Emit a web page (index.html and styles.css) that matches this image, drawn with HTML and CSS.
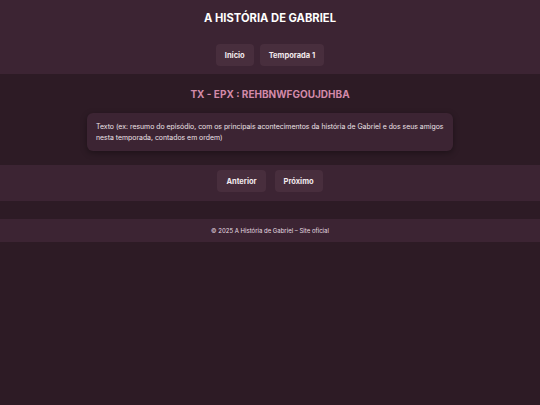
FILE: index.html
```html
<!DOCTYPE html>
<html lang="pt">
<head>
<meta charset="utf-8">
<title>A História de Gabriel</title>
<link rel="stylesheet" href="styles.css">
</head>
<body>
  <header class="top">
    <h1 class="title">A HISTÓRIA DE GABRIEL</h1>
    <nav class="menu">
      <a class="btn" href="#">Início</a>
      <a class="btn" href="#">Temporada 1</a>
    </nav>
  </header>
  <main class="main">
    <h2 class="ep-title">TX - EPX : REHBNWFGOUJDHBA</h2>
    <div class="card">
      <p>Texto (ex: resumo do episódio, com os principais acontecimentos da história de Gabriel e dos seus amigos nesta temporada, contados em ordem)</p>
    </div>
  </main>
  <div class="pager">
    <a class="btn" href="#">Anterior</a>
    <a class="btn" href="#">Próximo</a>
  </div>
  <footer class="foot">© 2025 A História de Gabriel – Site oficial</footer>
</body>
</html>
```

FILE: styles.css
```css
html, body {
  margin: 0;
  padding: 0;
  background: #2d1b25;
  font-family: Inter, "DejaVu Sans", sans-serif;
  color: #f1e8ec;
}
.top {
  background: #3c2433;
  height: 74px;
  display: flex;
  flex-direction: column;
  align-items: center;
  padding-top: 11px;
  box-sizing: border-box;
}
.title {
  margin: 0;
  font-size: 11.2px;
  font-weight: 700;
  color: #ffffff;
  line-height: 15px;
}
.menu {
  display: flex;
  gap: 6px;
  margin-top: 18px;
}
.btn {
  display: inline-flex;
  align-items: center;
  justify-content: center;
  height: 22px;
  padding: 0 9px;
  background: #482e3d;
  border-radius: 4px;
  color: #f3eaee;
  font-size: 7.5px;
  font-weight: 700;
  text-decoration: none;
}
.main {
  display: flex;
  flex-direction: column;
  align-items: center;
  padding-top: 13px;
  height: 91px;
  box-sizing: border-box;
}
.ep-title {
  margin: 0;
  font-size: 10px;
  font-weight: 700;
  color: #d38aa9;
  line-height: 14px;
}
.card {
  margin-top: 12px;
  width: 366px;
  box-sizing: border-box;
  background: #3c2433;
  border-radius: 6px;
  padding: 8px 9px;
  box-shadow: 0 2px 6px rgba(0, 0, 0, 0.35);
}
.card p {
  margin: 0;
  font-size: 6.9px;
  line-height: 11px;
  color: #ece2e7;
}
.pager {
  background: #3c2433;
  height: 36px;
  display: flex;
  justify-content: center;
  align-items: center;
  gap: 9px;
  padding-bottom: 4px;
  box-sizing: border-box;
}
.foot {
  margin-top: 18px;
  background: #3c2433;
  height: 23px;
  display: flex;
  align-items: center;
  justify-content: center;
  font-size: 6px;
  color: #e8dde2;
}
```
